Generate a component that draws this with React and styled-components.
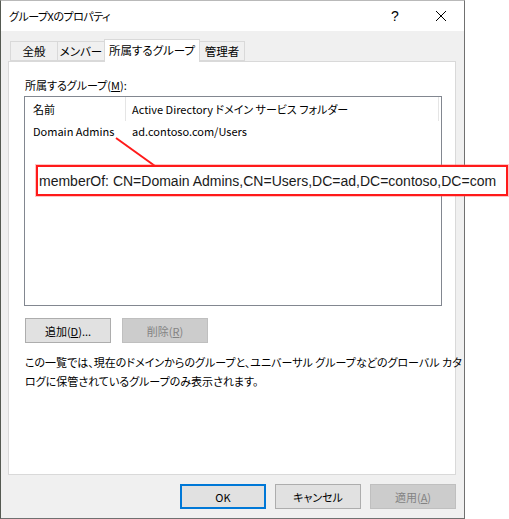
import React from "react"
import styled, { createGlobalStyle } from "styled-components"

const GlobalStyle = createGlobalStyle`
  body {
    margin: 0;
    background: #ffffff;
    font-family: "Noto Sans CJK JP", "Noto Sans", sans-serif;
    font-size: 11px;
    font-feature-settings: "palt";
    color: #000;
  }
`

const Stage = styled.div`
  position: relative;
  width: 509px;
  height: 519px;
`

const Window = styled.div`
  box-sizing: border-box;
  width: 465px;
  height: 519px;
  display: flex;
  flex-direction: column;
  background: #f0f0f0;
  border-top: 1px solid #b9b9b9;
  border-left: 1px solid #555a52;
  border-right: 1px solid #707070;
  border-bottom: 1px solid #707070;
`

const TitleBar = styled.div`
  height: 30px;
  display: flex;
  align-items: center;
  background: #ffffff;
  padding-left: 8px;
`

const Title = styled.div`
  flex: 1;
  line-height: 16px;
  font-size: 11px;
  letter-spacing: -0.5px;
`

const CaptionButton = styled.div`
  width: 46px;
  height: 30px;
  display: flex;
  align-items: center;
  justify-content: center;
  font-family: "Liberation Sans", sans-serif;
  font-size: 14px;
`

const Body = styled.div`
  flex: 1;
  display: flex;
  flex-direction: column;
  padding: 8px 8px 0 7px;
`

const TabStrip = styled.div`
  display: flex;
  align-items: flex-end;
  height: 23px;
  padding-left: 2px;
  margin-bottom: -1px;
  position: relative;
  z-index: 2;
`

const Tab = styled.div`
  box-sizing: border-box;
  width: ${p => p.$w}px;
  height: ${p => (p.$active ? 23 : 20)}px;
  margin-bottom: ${p => (p.$active ? 0 : 1)}px;
  margin-left: ${p => (p.$first ? 0 : -1)}px;
  border: 1px solid #d9d9d9;
  border-bottom: ${p => (p.$active ? "none" : "1px solid #d9d9d9")};
  background: ${p => (p.$active ? "#ffffff" : "#f0f0f0")};
  display: flex;
  align-items: center;
  justify-content: center;
  white-space: nowrap;
  padding-bottom: ${p => (p.$active ? 2 : 0)}px;
  line-height: 16px;
  font-size: 11.5px;
`

const Panel = styled.div`
  height: 414px;
  box-sizing: border-box;
  background: #ffffff;
  border: 1px solid #d9d9d9;
  padding: 15px 13px 0 15px;
  display: flex;
  flex-direction: column;
`

const Label = styled.div`
  line-height: 16px;
  margin-left: 1px;
  margin-bottom: 3px;
`

const ListView = styled.div`
  box-sizing: border-box;
  width: 418px;
  height: 210px;
  border: 1px solid #828790;
  background: #ffffff;
`

const HeaderRow = styled.div`
  display: flex;
  height: 24px;
  margin-right: 2px;
`

const HeaderCell = styled.div`
  box-sizing: border-box;
  width: ${p => (p.$w ? `${p.$w}px` : "auto")};
  flex: ${p => (p.$w ? "none" : 1)};
  border-right: 1px solid #e5e5e5;
  display: flex;
  align-items: center;
  white-space: nowrap;
  padding-left: ${p => p.$pad}px;
  line-height: 16px;
`

const Row = styled.div`
  display: flex;
  height: 20px;
  align-items: center;
  line-height: 16px;
  white-space: nowrap;
`

const Cell = styled.div`
  width: ${p => (p.$w ? `${p.$w}px` : "auto")};
  padding-left: ${p => p.$pad}px;
  box-sizing: border-box;
`

const ButtonRow = styled.div`
  display: flex;
  gap: 11px;
  margin: 12px 0 0 1px;
`

const Button = styled.div`
  box-sizing: border-box;
  width: 86px;
  height: 25px;
  display: flex;
  align-items: center;
  justify-content: center;
  white-space: nowrap;
  background: ${p => (p.$disabled ? "#cccccc" : "#e1e1e1")};
  border: ${p =>
    p.$default ? "2px solid #0078d7" : p.$disabled ? "1px solid #bfbfbf" : "1px solid #adadad"};
  color: ${p => (p.$disabled ? "#838383" : "#000")};
  line-height: 16px;
`

const Note = styled.div`
  margin: 10px 0 0 1px;
  line-height: 19px;
  white-space: nowrap;
`

const Footer = styled.div`
  display: flex;
  justify-content: flex-end;
  gap: 9px;
  padding: 9px 0 0 0;
`

const Callout = styled.div`
  position: absolute;
  z-index: 10;
  left: 36px;
  top: 165px;
  width: 472px;
  height: 31px;
  box-sizing: border-box;
  border: 2px solid #ff1a1a;
  box-shadow: 0 0 0 1px rgba(255, 90, 90, 0.35);
  background: #ffffff;
  display: flex;
  align-items: center;
  padding-left: 1px;
  white-space: nowrap;
  font-family: "Liberation Sans", Arial, sans-serif;
  font-size: 14px;
  font-feature-settings: normal;
  color: #1a1a1a;
`

const Pointer = styled.svg`
  position: absolute;
  z-index: 10;
  left: 0;
  top: 0;
  pointer-events: none;
`

const CloseIcon = () => (
  <svg width="12" height="12" viewBox="0 0 12 12">
    <path d="M1 1 L11 11 M11 1 L1 11" stroke="#000" strokeWidth="1" />
  </svg>
)

const App = () => (
  <Stage>
    <GlobalStyle />
    <Window>
      <TitleBar>
        <Title>グループXのプロパティ</Title>
        <CaptionButton>?</CaptionButton>
        <CaptionButton><CloseIcon /></CaptionButton>
      </TitleBar>
      <Body>
        <TabStrip>
          <Tab $first $w={48}>全般</Tab>
          <Tab $w={48}>メンバー</Tab>
          <Tab $active $w={96}>所属するグループ</Tab>
          <Tab $w={46}>管理者</Tab>
        </TabStrip>
        <Panel>
          <Label>所属するグループ(<u>M</u>):</Label>
          <ListView>
            <HeaderRow>
              <HeaderCell $w={101} $pad={8}>名前</HeaderCell>
              <HeaderCell $pad={6}>Active Directory ドメイン サービス フォルダー</HeaderCell>
            </HeaderRow>
            <Row>
              <Cell $w={101} $pad={8}>Domain Admins</Cell>
              <Cell $pad={6}>ad.contoso.com/Users</Cell>
            </Row>
          </ListView>
          <ButtonRow>
            <Button>追加(<u>D</u>)...</Button>
            <Button $disabled>削除(<u>R</u>)</Button>
          </ButtonRow>
          <Note>
            この一覧では、現在のドメインからのグループと、ユニバーサル グループなどのグローバル カタ
            <br />
            ログに保管されているグループのみ表示されます。
          </Note>
        </Panel>
        <Footer>
          <Button $default>OK</Button>
          <Button>キャンセル</Button>
          <Button $disabled>適用(<u>A</u>)</Button>
        </Footer>
      </Body>
    </Window>
    <Pointer width="509" height="519">
      <line x1="116" y1="138" x2="155" y2="166" stroke="#ff1a1a" strokeWidth="2" />
    </Pointer>
    <Callout>memberOf: CN=Domain Admins,CN=Users,DC=ad,DC=contoso,DC=com</Callout>
  </Stage>
)

export default App
